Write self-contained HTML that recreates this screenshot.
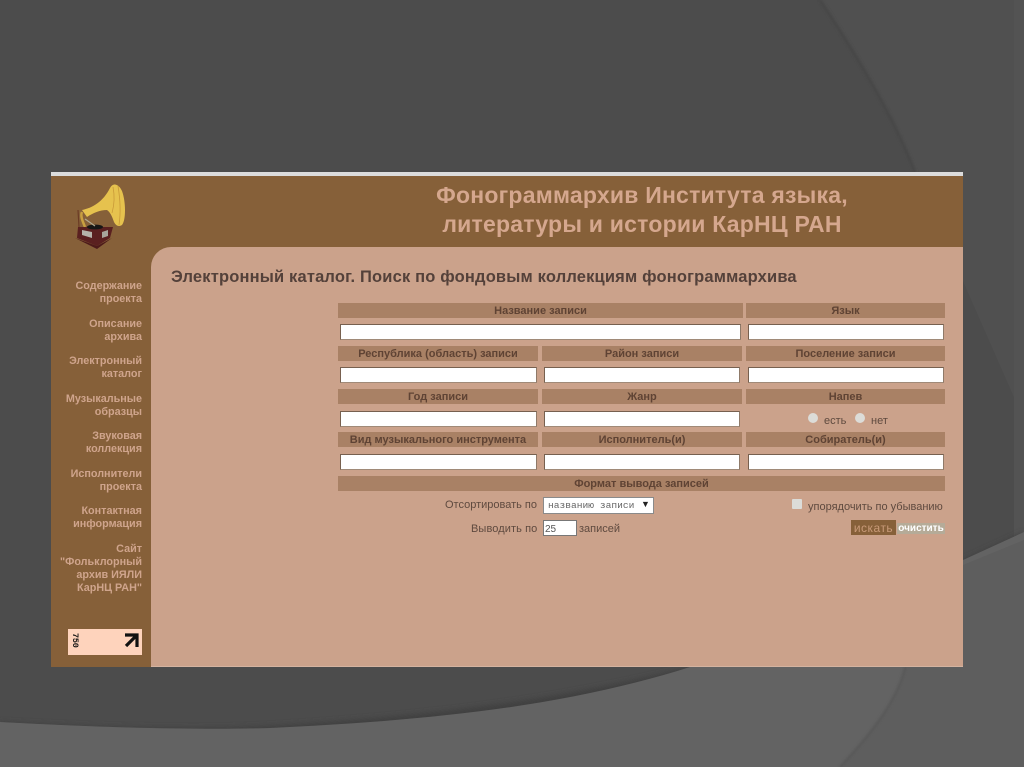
<!DOCTYPE html>
<html><head><meta charset="utf-8">
<style>
html,body{margin:0;padding:0;background:#4c4c4c}
#p{position:relative;width:1024px;height:767px;overflow:hidden;font-family:"Liberation Sans",sans-serif;background:#4c4c4c}
#p>svg.bg{position:absolute;left:0;top:0}
.a{position:absolute}
.h{position:absolute;background:#a98165;color:#5f4334;font-weight:bold;font-size:11px;text-align:center;height:15px;line-height:16px;white-space:nowrap}
.i{position:absolute;background:#fff;border:1px solid #77604f;border-right-color:#8f7a69;border-bottom-color:#a08a78;box-sizing:border-box;height:16px}
.m{position:absolute;right:882px;text-align:right;color:#cfa48c;font-weight:bold;font-size:10.8px;line-height:13px;white-space:nowrap}
.t{position:absolute;color:#5f4a3f;font-size:11px;line-height:13px;white-space:nowrap}
</style></head><body>
<div id="p">
<svg class="bg" width="1024" height="767" viewBox="0 0 1024 767">
<defs><filter id="b"><feGaussianBlur stdDeviation="1.2"/></filter><filter id="c"><feGaussianBlur stdDeviation="3"/></filter></defs>
<rect width="1024" height="767" fill="#4c4c4c"/>
<path d="M820 0C860 60 895 120 915 172L1024 420V0Z" fill="#505050"/>
<path d="M820 0C860 60 895 120 915 172" fill="none" stroke="#464646" stroke-width="3" filter="url(#b)"/>
<rect x="1014" y="0" width="10" height="540" fill="#535353"/>
<path d="M0 722C110 728 200 730 270 726C430 716 560 700 690 667L963 560L1024 532V767H0Z" fill="#414141" filter="url(#c)"/>
<path d="M0 722C110 728 200 730 270 728C440 720 570 705 690 667L963 560L1024 532V767H0Z" fill="#636363"/>
<path d="M905 667C898 700 870 735 840 767H1024V540L963 565V667Z" fill="#5e5e5e"/>
<path d="M905 667C898 700 870 735 840 767" fill="none" stroke="#565656" stroke-width="2" filter="url(#b)"/>
</svg>

<div class="a" style="left:51px;top:172px;width:912px;height:495px;background:#866039"></div>
<div class="a" style="left:51px;top:172px;width:912px;height:4px;background:#dcdcdc"></div>
<div class="a" style="left:151px;top:247px;width:812px;height:420px;background:#cba28b;border-radius:20px 0 0 0/20px 0 0 0"></div>
<div class="a" style="left:151px;top:666px;width:812px;height:1px;background:#d4b3a0"></div>

<svg class="a" style="left:60px;top:175px" width="80" height="80" viewBox="60 175 80 80">
<path d="M82 210C92 208 103 202 110 188C113 182 119 184 122 191C126 202 126 220 122 225C119 227 116 226 114 222C112 216 110 212 107 210C100 210 93 213 87 217Z" fill="#e6c24e"/>
<path d="M113 187C115 197 114 206 112 213M118 186C120 198 121 212 119 225" stroke="#c99a38" stroke-width=".8" fill="none"/>
<path d="M82 212C80 216 83 222 85 227" fill="none" stroke="#c9a040" stroke-width="2.5"/>
<path d="M78 210L79 227" stroke="#6b3b25" stroke-width="1.2"/>
<path d="M78 227H113L110 238L97 246L77 238Z" fill="#5a2020"/>
<path d="M82 230L92 232V238L82 235Z" fill="#b5b3aa"/><path d="M102 232L108 230V236L102 238Z" fill="#a8a69c"/>
<path d="M75 238L97 246L112 238L97 249Z" fill="#4d1a1a"/>
<ellipse cx="95" cy="227" rx="8" ry="2.4" fill="#161616"/>
<path d="M85 219L95 226" stroke="#b0a890" stroke-width="1.2"/>
</svg>

<div class="a" style="left:251px;top:181px;width:782px;text-align:center;color:#d5a78e;font-weight:bold;font-size:23px;letter-spacing:.22px;line-height:29px;white-space:nowrap">Фонограммархив Института языка,<br>литературы и истории КарНЦ РАН</div>

<div class="a" style="left:171px;top:268px;color:#54413a;font-weight:bold;font-size:16.5px;line-height:19px;white-space:nowrap;letter-spacing:.17px">Электронный каталог. Поиск по фондовым коллекциям фонограммархива</div>

<div class="m" style="top:280px">Содержание<br>проекта</div>
<div class="m" style="top:318px">Описание<br>архива</div>
<div class="m" style="top:355px">Электронный<br>каталог</div>
<div class="m" style="top:393px">Музыкальные<br>образцы</div>
<div class="m" style="top:430px">Звуковая<br>коллекция</div>
<div class="m" style="top:468px">Исполнители<br>проекта</div>
<div class="m" style="top:505px">Контактная<br>информация</div>
<div class="m" style="top:543px">Сайт<br>"Фольклорный<br>архив ИЯЛИ<br>КарНЦ РАН"</div>

<div class="a" style="left:68px;top:629px;width:74px;height:26px;background:#fed3bc"></div>
<svg class="a" style="left:68px;top:629px" width="74" height="26" viewBox="0 0 74 26">
<path d="M57 6H69V18M68 7L58 17" fill="none" stroke="#111" stroke-width="3.2"/>
<text x="5" y="4" transform="rotate(90 5 4)" font-family="Liberation Mono" font-weight="bold" font-size="8.5" fill="#111" letter-spacing="-.2">750</text>
</svg>

<div class="h" style="left:338px;top:303px;width:405px">Название записи</div>
<div class="h" style="left:746px;top:303px;width:199px">Язык</div>
<div class="i" style="left:340px;top:324px;width:401px"></div>
<div class="i" style="left:748px;top:324px;width:196px"></div>

<div class="h" style="left:338px;top:346px;width:200px">Республика (область) записи</div>
<div class="h" style="left:542px;top:346px;width:200px">Район записи</div>
<div class="h" style="left:746px;top:346px;width:199px">Поселение записи</div>
<div class="i" style="left:340px;top:367px;width:197px"></div>
<div class="i" style="left:544px;top:367px;width:196px"></div>
<div class="i" style="left:748px;top:367px;width:196px"></div>

<div class="h" style="left:338px;top:389px;width:200px">Год записи</div>
<div class="h" style="left:542px;top:389px;width:200px">Жанр</div>
<div class="h" style="left:746px;top:389px;width:199px">Напев</div>
<div class="i" style="left:340px;top:411px;width:197px"></div>
<div class="i" style="left:544px;top:411px;width:196px"></div>
<div class="a" style="left:808px;top:413px;width:10px;height:10px;border-radius:50%;background:#dcdcd8"></div>
<div class="t" style="left:824px;top:415px">есть</div>
<div class="a" style="left:855px;top:413px;width:10px;height:10px;border-radius:50%;background:#dcdcd8"></div>
<div class="t" style="left:871px;top:415px">нет</div>

<div class="h" style="left:338px;top:432px;width:200px">Вид музыкального инструмента</div>
<div class="h" style="left:542px;top:432px;width:200px">Исполнитель(и)</div>
<div class="h" style="left:746px;top:432px;width:199px">Собиратель(и)</div>
<div class="i" style="left:340px;top:454px;width:197px"></div>
<div class="i" style="left:544px;top:454px;width:196px"></div>
<div class="i" style="left:748px;top:454px;width:196px"></div>

<div class="h" style="left:338px;top:476px;width:607px">Формат вывода записей</div>

<div class="t" style="left:445px;top:499px">Отсортировать по</div>
<div class="a" style="left:543px;top:497px;width:111px;height:17px;box-sizing:border-box;background:#fff;border:1px solid #8a8a8a;color:#666;font-family:'Liberation Mono',monospace;font-size:9.6px;line-height:15px;padding-left:4px;white-space:nowrap">названию записи</div>
<div class="a" style="left:641px;top:498px;color:#222;font-size:9px;line-height:12px">▼</div>
<div class="t" style="left:808px;top:501px">упорядочить по убыванию</div>
<div class="a" style="left:792px;top:499px;width:10px;height:10px;background:#dcdcd8;border-radius:1px"></div>

<div class="t" style="left:471px;top:523px;letter-spacing:.1px">Выводить по</div>
<div class="a" style="left:543px;top:520px;width:34px;height:16px;box-sizing:border-box;background:#fff;border:1px solid #777;color:#555;font-size:10px;line-height:17px;padding-left:1px">25</div>
<div class="t" style="left:579px;top:523px">записей</div>

<div class="a" style="left:851px;top:520px;width:45px;height:15px;background:#866039;color:#c89a78;font-size:12px;line-height:16px;text-align:center;letter-spacing:.5px">искать</div>
<div class="a" style="left:897px;top:523px;width:48px;height:11px;background:#b5ab98;color:#fff;font-weight:bold;font-size:10px;line-height:11px;text-align:center;white-space:nowrap">очистить</div>
</div>
</body></html>
